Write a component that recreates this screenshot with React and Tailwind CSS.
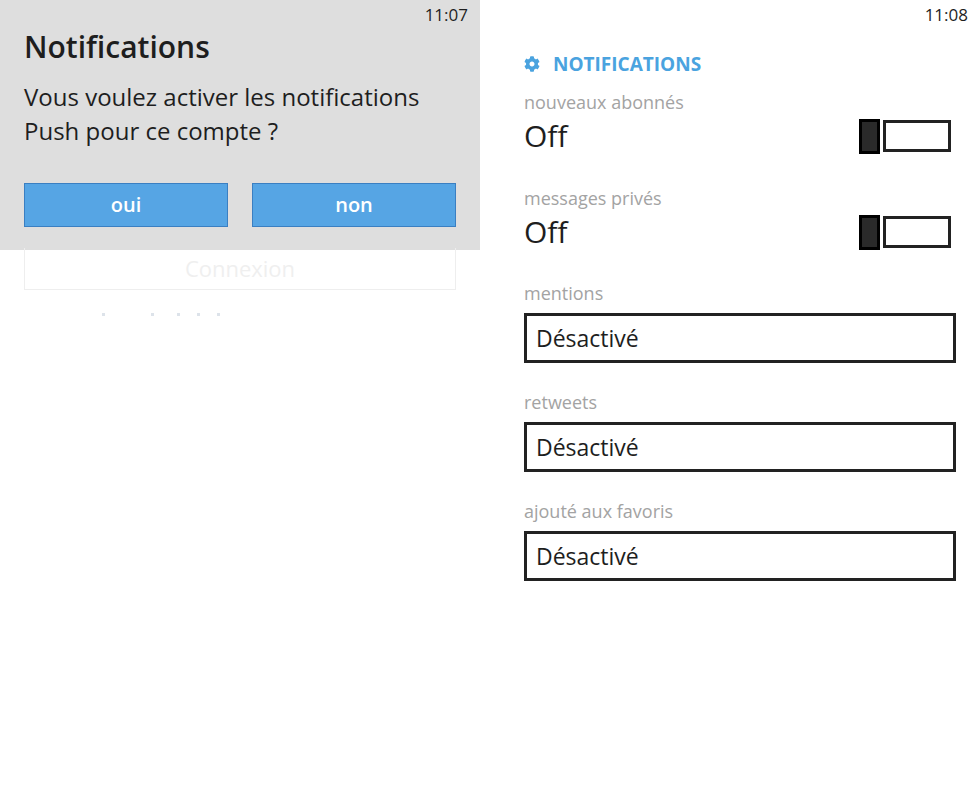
import React from "react";
import { FaCog } from "react-icons/fa";

const font = { fontFamily: '"Open Sans", "Noto Sans", sans-serif' };

function Toggle() {
  return (
    <div className="flex items-center h-[35px]">
      <div className="w-[21px] h-[35px] bg-black p-[3px]">
        <div className="w-full h-full bg-[#2a2a2a]" />
      </div>
      <div className="ml-[3px] w-[68px] h-[32px] border-[3px] border-[#222]" />
    </div>
  );
}

function ToggleRow({ label }) {
  return (
    <div className="flex flex-col">
      <div className="text-[18px] leading-[22px] text-[#a3a3a3]">{label}</div>
      <div className="flex items-center justify-between mt-[5px] pr-[29px]">
        <div className="text-[30px] leading-[36px] text-[#1e1e1e]">Off</div>
        <Toggle />
      </div>
    </div>
  );
}

function SelectRow({ label }) {
  return (
    <div className="flex flex-col">
      <div className="text-[18px] leading-[22px] text-[#a3a3a3]">{label}</div>
      <div className="mt-[9px] mr-[24px] h-[50px] border-[3px] border-[#222] flex items-center px-[9px]">
        <span className="text-[23px] text-[#1e1e1e] leading-none">Désactivé</span>
      </div>
    </div>
  );
}

export default function App() {
  return (
    <div className="w-[980px] h-[800px] bg-white flex" style={font}>
      {/* Left */}
      <div className="w-[480px] h-full flex flex-col relative">
        <div className="h-[250px] bg-[#dedede] flex flex-col px-[24px]">
          <div className="flex justify-end pt-[4px] -mr-[12px]">
            <span className="text-[17px] leading-[22px] text-[#1e1e1e]">11:07</span>
          </div>
          <div className="mt-[3px] text-[30px] leading-[36px] font-semibold text-[#1e1e1e]">Notifications</div>
          <div className="mt-[15px] text-[24px] leading-[34px] text-[#1e1e1e]">
            Vous voulez activer les notifications
            <br />
            Push pour ce compte ?
          </div>
          <div className="mt-[35px] flex gap-[24px]">
            <div className="w-[204px] h-[44px] bg-[#56a5e4] border border-[#3a7fc2] flex items-center justify-center text-white text-[20px] font-semibold">
              oui
            </div>
            <div className="w-[204px] h-[44px] bg-[#56a5e4] border border-[#3a7fc2] flex items-center justify-center text-white text-[20px] font-semibold">
              non
            </div>
          </div>
        </div>
        <div className="mx-[24px] -mt-[2px] h-[42px] border border-[#eeeeee] border-t-0 flex items-center justify-center text-[22px] text-[#efefef]">
          Connexion
        </div>
        <div className="flex items-center mt-[23px] ml-[102px]">
          <div className="w-[3px] h-[3px] bg-[#dde3ea]" />
          <div className="w-[3px] h-[3px] bg-[#dde3ea] ml-[46px]" />
          <div className="w-[3px] h-[3px] bg-[#dde3ea] ml-[23px]" />
          <div className="w-[3px] h-[3px] bg-[#dde3ea] ml-[17px]" />
          <div className="w-[3px] h-[3px] bg-[#dde3ea] ml-[17px]" />
        </div>
      </div>

      {/* Right */}
      <div className="w-[500px] h-full flex flex-col pl-[44px]">
        <div className="flex justify-end pt-[4px] pr-[12px]">
          <span className="text-[17px] leading-[22px] text-[#1e1e1e]">11:08</span>
        </div>
        <div className="flex items-center mt-[27px] h-[22px]">
          <FaCog className="text-[#4aa3df] w-[16px] h-[16px]" />
          <span className="ml-[13px] text-[19px] font-bold text-[#4aa3df] leading-none">NOTIFICATIONS</span>
        </div>
        <div className="mt-[16px] flex flex-col gap-[33px]">
          <ToggleRow label="nouveaux abonnés" />
          <ToggleRow label="messages privés" />
        </div>
        <div className="mt-[32px] flex flex-col gap-[28px]">
          <SelectRow label="mentions" />
          <SelectRow label="retweets" />
          <SelectRow label="ajouté aux favoris" />
        </div>
      </div>
    </div>
  );
}
